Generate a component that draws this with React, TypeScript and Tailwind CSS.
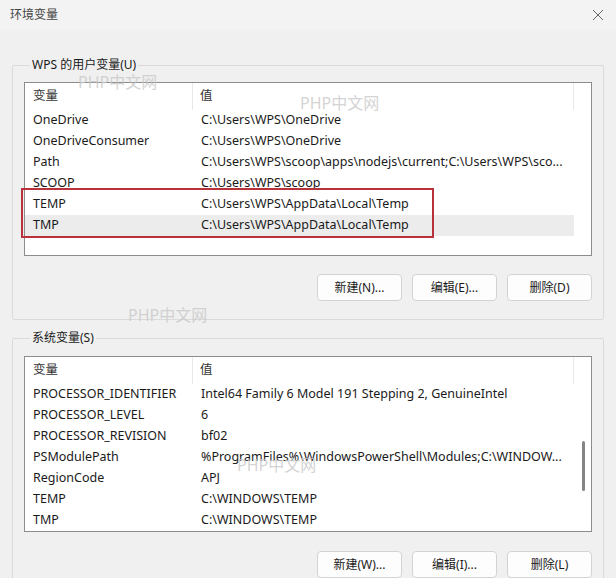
import React from "react";

type Row = { k: string; v: string; sel?: boolean };

const userRows: Row[] = [
  { k: "OneDrive", v: "C:\\Users\\WPS\\OneDrive" },
  { k: "OneDriveConsumer", v: "C:\\Users\\WPS\\OneDrive" },
  { k: "Path", v: "C:\\Users\\WPS\\scoop\\apps\\nodejs\\current;C:\\Users\\WPS\\sco..." },
  { k: "SCOOP", v: "C:\\Users\\WPS\\scoop" },
  { k: "TEMP", v: "C:\\Users\\WPS\\AppData\\Local\\Temp" },
  { k: "TMP", v: "C:\\Users\\WPS\\AppData\\Local\\Temp", sel: true },
];

const sysRows: Row[] = [
  { k: "PROCESSOR_IDENTIFIER", v: "Intel64 Family 6 Model 191 Stepping 2, GenuineIntel" },
  { k: "PROCESSOR_LEVEL", v: "6" },
  { k: "PROCESSOR_REVISION", v: "bf02" },
  { k: "PSModulePath", v: "%ProgramFiles%\\WindowsPowerShell\\Modules;C:\\WINDOW..." },
  { k: "RegionCode", v: "APJ" },
  { k: "TEMP", v: "C:\\WINDOWS\\TEMP" },
  { k: "TMP", v: "C:\\WINDOWS\\TEMP" },
];

function ListBox({ rows, h, scroll }: { rows: Row[]; h: string; scroll?: boolean }) {
  return (
    <div className={`relative bg-white border border-[#8c8c8c] ${h} flex overflow-hidden text-[12.5px]`}>
      <div className="flex-1 flex flex-col">
        <div className="flex h-[27px] shrink-0 items-center text-[#333]">
          <div className="w-[168px] pl-[8px] border-r border-[#e8e8e8] h-full flex items-center">变量</div>
          <div className="flex-1 pl-[7px] border-r border-[#e8e8e8] h-full flex items-center">值</div>
        </div>
        {rows.map((r, i) => (
          <div key={i} className={`flex h-[21px] shrink-0 items-center text-[#1a1a1a] ${r.sel ? "bg-[#ececec]" : ""}`}>
            <div className="w-[168px] pl-[8px] whitespace-nowrap">{r.k}</div>
            <div className="flex-1 pl-[8px] whitespace-nowrap overflow-hidden">{r.v}</div>
          </div>
        ))}
      </div>
      <div className="w-[17px] relative">
        {scroll && <div className="absolute left-[8px] top-[84px] w-[3px] h-[50px] rounded-full bg-[#858585]" />}
      </div>
    </div>
  );
}

function Btn({ label }: { label: string }) {
  return (
    <button className="w-[85px] h-[27px] bg-[#fdfdfd] border border-[#d3d3d3] rounded-[4px] text-[12px] text-[#1a1a1a] flex items-center justify-center">
      {label}
    </button>
  );
}

function Group({ title, children, cls }: { title: string; children: React.ReactNode; cls: string }) {
  return (
    <fieldset className={`border border-[#dadada] rounded-[2px] px-[11px] ${cls}`}>
      <legend className="ml-[6px] px-[2px] text-[#1a1a1a] leading-[16px]">{title}</legend>
      {children}
    </fieldset>
  );
}

export default function App() {
  return (
    <div
      className="relative w-[616px] h-[578px] bg-[#f0f0f0] overflow-hidden text-[12px]"
      style={{ fontFamily: '"Noto Sans", "Noto Sans CJK SC", sans-serif' }}
    >
      <div className="h-[30px] bg-[#f3f3f3] flex items-center justify-between pl-[10px] pr-[10px]">
        <span className="text-[#444] text-[12px]">环境变量</span>
        <svg width="12" height="12" viewBox="0 0 12 12" className="mr-[2px]">
          <path d="M1 1 L11 11 M11 1 L1 11" stroke="#666" strokeWidth="1" />
        </svg>
      </div>

      <div className="px-[12px] pt-[27px]">
        <Group title="WPS 的用户变量(U)" cls="h-[263px] pt-[9px]">
          <ListBox rows={userRows} h="h-[174px]" />
          <div className="flex justify-end gap-[10px] mt-[18px]">
            <Btn label="新建(N)..." />
            <Btn label="编辑(E)..." />
            <Btn label="删除(D)" />
          </div>
        </Group>

        <Group title="系统变量(S)" cls="mt-[10px] h-[260px] pt-[10px]">
          <ListBox rows={sysRows} h="h-[176px]" scroll />
          <div className="flex justify-end gap-[10px] mt-[19px]">
            <Btn label="新建(W)..." />
            <Btn label="编辑(I)..." />
            <Btn label="删除(L)" />
          </div>
        </Group>
      </div>

      {/* highlight box */}
      <div className="absolute left-[21px] top-[188px] w-[413px] h-[50px] border-2 border-[#b8323c]" />

      {/* watermarks */}
      <div className="absolute left-[78px] top-[74px] leading-none text-[16px] text-[#c8c8c8]/80 pointer-events-none">PHP中文网</div>
      <div className="absolute left-[300px] top-[95px] leading-none text-[16px] text-[#c8c8c8]/80 pointer-events-none">PHP中文网</div>
      <div className="absolute left-[128px] top-[307px] leading-none text-[16px] text-[#c8c8c8]/80 pointer-events-none">PHP中文网</div>
      <div className="absolute left-[237px] top-[457px] leading-none text-[16px] text-[#c8c8c8]/80 pointer-events-none">PHP中文网</div>
    </div>
  );
}
